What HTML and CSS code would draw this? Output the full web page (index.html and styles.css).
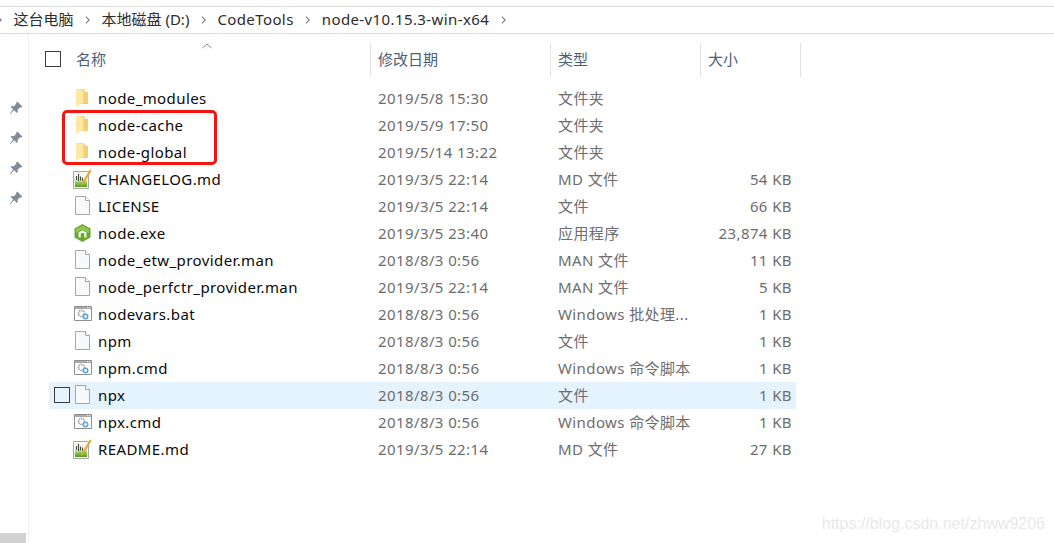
FILE: index.html
```html
<!DOCTYPE html>
<html lang="zh-CN">

<head>
	<title>node-v10.15.3-win-x64</title>
	<meta charset="UTF-8">
	<link rel="stylesheet" href="styles.css">
</head>

<body>
	<svg class="defs" width="0" height="0">
		<symbol id="i-chev" viewBox="0 0 6 10">
			<path d="M1 1l4 4-4 4" fill="none" stroke="#808080" stroke-width="1.4" />
		</symbol>
		<symbol id="i-pin" viewBox="0 0 14 14">
			<path d="M8.2 0.6l5.2 5-1 1-1.2-.3-2.6 2.4.2 2.3-1 1-2.5-2.7L1 13.3l-.4-.4 3.6-4.4L1.7 6l1-1 2.3.2 2.4-2.6-.2-1.1z" fill="#7f8d99" />
		</symbol>
		<symbol id="i-folder" viewBox="0 0 14 18">
			<path d="M1 0h8l1.5 3H13v12H1z" fill="#f2cf74" />
			<path d="M1 0l8 1v12.500L1 18z" fill="#fde9a6" />
			<path d="M7.500 1h1.500v12.500H7.500z" fill="#f8dc8a" />
		</symbol>
		<symbol id="i-doc" viewBox="0 0 15 19">
			<path d="M.5.500h10l4 4v14H.5z" fill="#f8f9fb" stroke="#a6a6a6" />
			<path d="M10.500.500v4h4" fill="#fff" stroke="#a6a6a6" />
		</symbol>
		<symbol id="i-md" viewBox="0 0 19 21">
			<linearGradient id="g-md" x1="0" y1="0" x2="0" y2="1">
				<stop offset="0.45" stop-color="#f6f8f0" />
				<stop offset="0.68" stop-color="#8fcb55" />
				<stop offset="1" stop-color="#4f9c27" />
			</linearGradient>
			<path d="M.5 3.500h15v17H.5z" fill="#f4f4f4" stroke="#a8a8a8" />
			<path d="M2 5h12v14H2z" fill="url(#g-md)" />
			<path d="M3.500 8v4M5.500 6v7M7.500 8.500v4M9.500 9.500v3" stroke="#3f4a3a" stroke-width="1.100" />
			<path d="M8.500 15.500l8.500-14 1.700 1.100-8.500 14-2.200 1.200z" fill="#e9a32e" />
		</symbol>
		<symbol id="i-node" viewBox="0 0 17 18">
			<path d="M8.500 0l8 4.500v9l-8 4.500-8-4.500v-9z" fill="#6ba72f" />
			<path d="M8.500 1.500l6.500 3.700v4L8.500 5.500 2 9.200v-4z" fill="#93c752" />
			<path d="M4.500 13.500V8.500l4-2.300 4 2.300v5h-2.200V9.700L8.500 8.700l-1.800 1v3.800z" fill="#f2f7ea" />
		</symbol>
		<symbol id="i-bat" viewBox="0 0 18 15">
			<path d="M.5.500h17v14H.5z" fill="#fff" stroke="#8f8f8f" />
			<path d="M1 1h16v2H1z" fill="#a9a9a9" />
			<path d="M13 1.500h1.200M15 1.500h1.200" stroke="#eee" />
			<circle cx="7.500" cy="7.500" r="3" fill="none" stroke="#a8a8a8" stroke-width="1.800" stroke-dasharray="1.500 .7" />
			<circle cx="11.500" cy="10.500" r="2.200" fill="none" stroke="#5aa5dc" stroke-width="1.600" />
		</symbol>
	</svg>

	<nav class="crumbs">
		<svg class="chev first"><use href="#i-chev" /></svg>
		<span class="zh">这台电脑</span>
		<svg class="chev"><use href="#i-chev" /></svg>
		<span class="zh">本地磁盘 (D:)</span>
		<svg class="chev"><use href="#i-chev" /></svg>
		<span>CodeTools</span>
		<svg class="chev"><use href="#i-chev" /></svg>
		<span>node-v10.15.3-win-x64</span>
		<svg class="chev"><use href="#i-chev" /></svg>
	</nav>

	<div class="main">
		<aside class="quick">
			<svg class="pin"><use href="#i-pin" /></svg>
			<svg class="pin"><use href="#i-pin" /></svg>
			<svg class="pin"><use href="#i-pin" /></svg>
			<svg class="pin"><use href="#i-pin" /></svg>
			<div class="scroll-thumb"></div>
		</aside>

		<section class="files">
			<div class="head">
				<div class="col col-name">
					<span class="check"></span>
					<span>名称</span>
					<svg class="sort" viewBox="0 0 10 6"><path d="M.5 5L5 1l4.500 4" fill="none" stroke="#8a8a8a" /></svg>
				</div>
				<div class="col">修改日期</div>
				<div class="col">类型</div>
				<div class="col">大小</div>
			</div>

			<div class="list">
				<div class="marked"></div>

				<div class="row">
					<div class="name"><span class="check"></span><svg class="icon folder"><use href="#i-folder" /></svg><span>node_modules</span></div>
					<div>2019/5/8 15:30</div><div>文件夹</div><div class="size"></div>
				</div>
				<div class="row">
					<div class="name"><span class="check"></span><svg class="icon folder"><use href="#i-folder" /></svg><span>node-cache</span></div>
					<div>2019/5/9 17:50</div><div>文件夹</div><div class="size"></div>
				</div>
				<div class="row">
					<div class="name"><span class="check"></span><svg class="icon folder"><use href="#i-folder" /></svg><span>node-global</span></div>
					<div>2019/5/14 13:22</div><div>文件夹</div><div class="size"></div>
				</div>
				<div class="row">
					<div class="name"><span class="check"></span><svg class="icon md"><use href="#i-md" /></svg><span>CHANGELOG.md</span></div>
					<div>2019/3/5 22:14</div><div>MD 文件</div><div class="size">54 KB</div>
				</div>
				<div class="row">
					<div class="name"><span class="check"></span><svg class="icon doc"><use href="#i-doc" /></svg><span>LICENSE</span></div>
					<div>2019/3/5 22:14</div><div>文件</div><div class="size">66 KB</div>
				</div>
				<div class="row">
					<div class="name"><span class="check"></span><svg class="icon node"><use href="#i-node" /></svg><span>node.exe</span></div>
					<div>2019/3/5 23:40</div><div>应用程序</div><div class="size">23,874 KB</div>
				</div>
				<div class="row">
					<div class="name"><span class="check"></span><svg class="icon doc"><use href="#i-doc" /></svg><span>node_etw_provider.man</span></div>
					<div>2018/8/3 0:56</div><div>MAN 文件</div><div class="size">11 KB</div>
				</div>
				<div class="row">
					<div class="name"><span class="check"></span><svg class="icon doc"><use href="#i-doc" /></svg><span>node_perfctr_provider.man</span></div>
					<div>2019/3/5 22:14</div><div>MAN 文件</div><div class="size">5 KB</div>
				</div>
				<div class="row">
					<div class="name"><span class="check"></span><svg class="icon bat"><use href="#i-bat" /></svg><span>nodevars.bat</span></div>
					<div>2018/8/3 0:56</div><div>Windows 批处理...</div><div class="size">1 KB</div>
				</div>
				<div class="row">
					<div class="name"><span class="check"></span><svg class="icon doc"><use href="#i-doc" /></svg><span>npm</span></div>
					<div>2018/8/3 0:56</div><div>文件</div><div class="size">1 KB</div>
				</div>
				<div class="row">
					<div class="name"><span class="check"></span><svg class="icon bat"><use href="#i-bat" /></svg><span>npm.cmd</span></div>
					<div>2018/8/3 0:56</div><div>Windows 命令脚本</div><div class="size">1 KB</div>
				</div>
				<div class="row hover">
					<div class="name"><span class="check"></span><svg class="icon doc"><use href="#i-doc" /></svg><span>npx</span></div>
					<div>2018/8/3 0:56</div><div>文件</div><div class="size">1 KB</div>
				</div>
				<div class="row">
					<div class="name"><span class="check"></span><svg class="icon bat"><use href="#i-bat" /></svg><span>npx.cmd</span></div>
					<div>2018/8/3 0:56</div><div>Windows 命令脚本</div><div class="size">1 KB</div>
				</div>
				<div class="row">
					<div class="name"><span class="check"></span><svg class="icon md"><use href="#i-md" /></svg><span>README.md</span></div>
					<div>2019/3/5 22:14</div><div>MD 文件</div><div class="size">27 KB</div>
				</div>
			</div>
		</section>
	</div>

	<div class="watermark">https://blog.csdn.net/zhww9206</div>
</body>

</html>
```

FILE: styles.css
```css
html,
body {
	height: 100%;
}

body {
	margin: 0;
	display: flex;
	flex-direction: column;
	overflow: hidden;
	background: #fff;
	color: #6d6d6d;
	font-family: "Noto Sans", "Noto Sans CJK SC", sans-serif;
	font-size: 15px;
	line-height: 20px;
	letter-spacing: 0.4px;
	position: relative;
}

.defs {
	position: absolute;
}

.crumbs {
	margin-top: 6px;
	height: 26px;
	display: flex;
	align-items: center;
	gap: 11.5px;
	border-top: 1px solid #dcdcdc;
	border-bottom: 1px solid #dcdcdc;
	color: #2c2c2c;
}

.crumbs span {
	position: relative;
	top: -1px;
}

.crumbs .zh {
	letter-spacing: 0;
}

.chev {
	width: 5px;
	height: 10px;
	flex: none;
}

.chev.first {
	margin-left: -3px;
}

.main {
	flex: 1;
	display: flex;
	min-height: 0;
}

.quick {
	width: 28px;
	flex: none;
	border-right: 1px solid #f0f0f0;
	padding-top: 67px;
	display: flex;
	flex-direction: column;
	gap: 16px;
}

.pin {
	width: 14px;
	height: 14px;
	margin-left: 9px;
	flex: none;
}

.scroll-thumb {
	margin-top: auto;
	width: 26px;
	height: 10px;
	background: #d2d2d2;
}

.files {
	flex: 1;
	padding-left: 20px;
}

.head,
.row {
	display: grid;
	align-items: center;
}

.head {
	grid-template-columns: 322px 180px 150px 100px;
	margin-top: 9px;
	height: 34px;
	width: 752px;
	color: #4c607a;
	letter-spacing: 0;
}

.col {
	height: 100%;
	display: flex;
	align-items: center;
	padding: 0 0 2px 7px;
	border-right: 1px solid #e3e3e3;
	box-sizing: border-box;
}

.col-name {
	padding-left: 0;
	gap: 15px;
	position: relative;
}

.col-name .check {
	margin-left: -4px;
	visibility: visible;
}

.sort {
	position: absolute;
	left: 153px;
	top: 0;
	width: 10px;
	height: 6px;
}

.check {
	width: 14px;
	height: 14px;
	border: 1px solid #3c3c3c;
	flex: none;
	visibility: hidden;
}

.list {
	margin-top: 8px;
	position: relative;
}

.marked {
	position: absolute;
	left: 13px;
	top: 25px;
	width: 149px;
	height: 49px;
	border: 3px solid #f5140f;
	border-radius: 5px;
}

.row {
	height: 27px;
	width: 747px;
	grid-template-columns: 321px 180px 150px 96px;
}

.row > div {
	position: relative;
	top: -1px;
}

.row > div:not(.name) {
	padding-left: 8px;
}

.row .size {
	padding: 0 4px 0 0;
	text-align: right;
}

.name {
	display: flex;
	align-items: center;
	padding-left: 5px;
	color: #0a0a0a;
}

.icon {
	flex: none;
}

.folder {
	width: 14px;
	height: 18px;
	margin: 0 9px 0 5px;
}

.doc {
	width: 15px;
	height: 19px;
	margin: 0 8px 0 5px;
}

.md {
	width: 19px;
	height: 21px;
	margin: 0 6px 0 3px;
}

.node {
	width: 17px;
	height: 18px;
	margin: 0 7px 0 4px;
}

.bat {
	width: 18px;
	height: 15px;
	margin: 0 6px 0 4px;
}

.hover {
	background: #e5f3ff;
}

.hover .check {
	visibility: visible;
}

.watermark {
	position: absolute;
	right: 9px;
	bottom: 9px;
	font-family: "Liberation Sans", Arial, sans-serif;
	font-size: 16px;
	letter-spacing: 0;
	color: #e9e9e9;
}
```
